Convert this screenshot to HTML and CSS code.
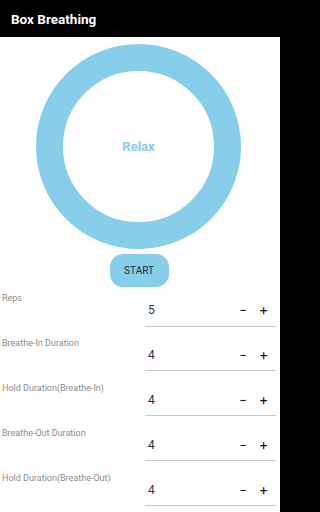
FILE: index.html
```html
<!DOCTYPE html>
<html>
<head>
<meta charset="utf-8">
<link rel="stylesheet" href="styles.css">
</head>
<body>
<div class="app">
  <header class="bar">Box Breathing</header>
  <main class="content">
    <div class="ring"><span class="phase">Relax</span></div>
    <button class="start">START</button>
    <div class="rows">
      <div class="row">
        <div class="label">Reps</div>
        <div class="field"><span class="val">5</span><span class="ctl minus">−</span><span class="ctl plus">+</span></div>
      </div>
      <div class="row">
        <div class="label">Breathe-In Duration</div>
        <div class="field"><span class="val">4</span><span class="ctl minus">−</span><span class="ctl plus">+</span></div>
      </div>
      <div class="row">
        <div class="label">Hold Duration(Breathe-In)</div>
        <div class="field"><span class="val">4</span><span class="ctl minus">−</span><span class="ctl plus">+</span></div>
      </div>
      <div class="row">
        <div class="label">Breathe-Out Duration</div>
        <div class="field"><span class="val">4</span><span class="ctl minus">−</span><span class="ctl plus">+</span></div>
      </div>
      <div class="row">
        <div class="label">Hold Duration(Breathe-Out)</div>
        <div class="field"><span class="val">4</span><span class="ctl minus">−</span><span class="ctl plus">+</span></div>
      </div>
    </div>
  </main>
</div>
</body>
</html>
```
FILE: styles.css
```css
html, body {
  margin: 0;
  padding: 0;
  background: #000;
}
.app {
  width: 283px;
  height: 512px;
  overflow: hidden;
  font-family: Roboto, "Liberation Sans", sans-serif;
  display: flex;
  flex-direction: column;
}
.bar {
  height: 37px;
  flex: none;
  background: #000;
  color: #fff;
  font-weight: 700;
  font-size: 13.5px;
  display: flex;
  align-items: center;
  padding-left: 11px;
  box-sizing: border-box;
}
.content {
  flex: 1;
  background: #fff;
  margin-right: 3px;
  display: flex;
  flex-direction: column;
  align-items: center;
}
.ring {
  margin-top: 7px;
  width: 205px;
  height: 205px;
  box-sizing: border-box;
  border: 27px solid #87ceeb;
  border-radius: 50%;
  display: flex;
  align-items: center;
  justify-content: center;
  margin-left: -3px;
}
.phase {
  color: #87ceeb;
  font-weight: 700;
  font-size: 13px;
}
.start {
  margin-top: 5px;
  width: 59px;
  height: 33px;
  border: none;
  border-radius: 13px;
  background: #87ceeb;
  color: #1b2b48;
  font-family: Roboto, "Liberation Sans", sans-serif;
  font-size: 10px;
  font-weight: 400;
  padding: 0;
  margin-left: -2px;
}
.rows {
  align-self: stretch;
  margin-top: 4px;
  display: flex;
  flex-direction: column;
}
.row {
  height: 44.9px;
  display: flex;
  flex-direction: column;
}
.label {
  height: 10px;
  line-height: 14px;
  font-size: 9px;
  color: #8c8c8c;
  padding-left: 2px;
}
.field {
  margin-left: 145px;
  width: 131px;
  height: 25.5px;
  box-sizing: border-box;
  border-bottom: 1.5px solid #c8c8c8;
  display: flex;
  align-items: flex-start;
  line-height: 18px;
}
.val {
  font-size: 12px;
  color: #333;
  padding-left: 3px;
  flex: 1;
}
.ctl {
  font-size: 13.5px;
  color: #111;
  text-align: center;
  width: 10px;
}
.minus {
  margin-right: 10.5px;
}
.plus {
  margin-right: 7.5px;
}
```
